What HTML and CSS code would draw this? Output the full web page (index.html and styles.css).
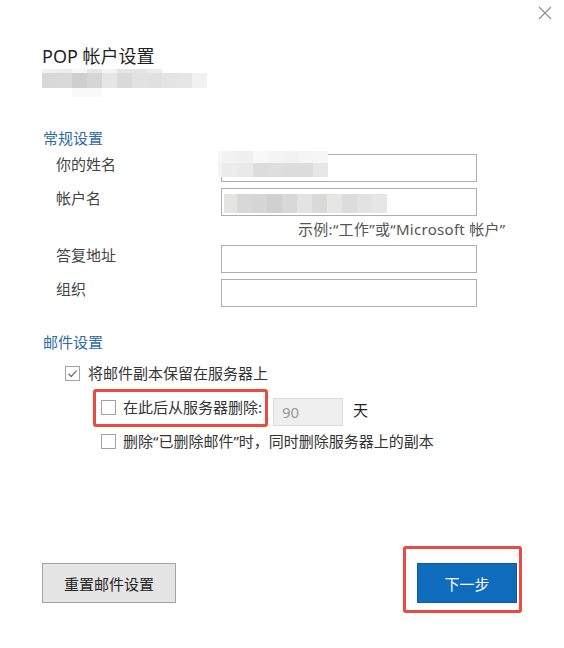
FILE: index.html
```html
<!doctype html>
<html>
<head>
    <meta charset="utf-8">
    <title>POP 帐户设置</title>
    <link rel="stylesheet" href="styles.css">
</head>
<body>

<div class="dialog">
    <button class="close" type="button" aria-label="关闭">
        <svg width="14" height="14" viewBox="0 0 14 14"><path d="M1 1L13 13M13 1L1 13" stroke="#8c8c8c" stroke-width="1.1" fill="none"/></svg>
    </button>

    <div class="head">
        <h1 class="title">POP 帐户设置</h1>
        <div class="mosaic mosaic-email"></div>
    </div>

    <div class="group">
        <h2 class="group-title">常规设置</h2>
        <div class="form">
            <label class="form-label">你的姓名</label>
            <div class="field">
                <input class="text-input" type="text">
                <span class="mosaic mosaic-name"></span>
            </div>

            <label class="form-label">帐户名</label>
            <div class="field">
                <input class="text-input" type="text">
                <span class="mosaic mosaic-account"></span>
            </div>

            <div class="hint">示例:“工作”或“Microsoft 帐户”</div>

            <label class="form-label">答复地址</label>
            <div class="field"><input class="text-input" type="text"></div>

            <label class="form-label">组织</label>
            <div class="field"><input class="text-input" type="text"></div>
        </div>
    </div>

    <div class="group group-mail">
        <h2 class="group-title">邮件设置</h2>

        <div class="check-row">
            <span class="box checked">
                <svg width="13" height="13" viewBox="0 0 13 13"><path d="M2.5 6.8L5.2 9.5L10.6 3.6" stroke="#707070" stroke-width="1.3" fill="none"/></svg>
            </span>
            <span class="check-text">将邮件副本保留在服务器上</span>
        </div>

        <div class="check-row sub">
            <span class="marked marked-delete">
                <span class="box"></span>
                <span class="check-text">在此后从服务器删除:</span>
            </span>
            <input class="days" type="text" value="90" disabled>
            <span class="days-unit">天</span>
        </div>

        <div class="check-row sub">
            <span class="box"></span>
            <span class="check-text">删除“已删除邮件”时，同时删除服务器上的副本</span>
        </div>
    </div>

    <div class="footer">
        <button class="btn btn-reset" type="button">重置邮件设置</button>
        <span class="marked marked-next">
            <button class="btn btn-next" type="button">下一步</button>
        </span>
    </div>
</div>

</body>
</html>
```

FILE: styles.css
```css
html, body {
    margin: 0;
    background: #fff;
}

body {
    font-family: "Noto Sans", "Noto Sans CJK SC", sans-serif;
    font-size: 15px;
    color: #333;
}

.dialog {
    position: relative;
    display: flex;
    flex-direction: column;
    min-height: 648px;
    box-sizing: border-box;
    padding-left: 42px;
}

.close {
    position: absolute;
    top: 6px;
    right: 12px;
    width: 14px;
    height: 14px;
    padding: 0;
    border: 0;
    background: none;
}
.close svg {
    display: block;
}

/* header */

.head {
    padding-top: 44px;
}

.title {
    margin: 0;
    font-size: 18px;
    font-weight: normal;
    line-height: 24px;
    color: #1f1f1f;
}

.mosaic {
    display: block;
}

.mosaic-email {
    width: 165px;
    height: 28px;
    margin-top: 1px;
    background:
        linear-gradient(90deg, #f1f1f1 0 15px, #eeeeee 15px 30px, #f7f7f7 30px 45px, #e8e8e8 45px 60px, #f4f4f4 60px 75px, #e4e4e4 75px 90px, #e5e5e5 90px 105px, #ececec 105px 120px) 0 0 / 120px 4px no-repeat,
        linear-gradient(90deg, #d8d8d8 0 15px, #d9d9d9 15px 30px, #cfcfcf 30px 45px, #d5d5d5 45px 60px, #e6e6e6 60px 75px, #dadada 75px 90px, #e2e2e2 90px 105px, #e1e1e1 105px 120px, #e4e4e4 120px 135px, #e6e6e6 135px 150px, #f1f1f1 150px 165px) 0 4px / 165px 15px no-repeat,
        linear-gradient(#f9f9f9, #f9f9f9) 30px 19px / 30px 9px no-repeat;
}

/* sections */

.group {
    margin-top: 31px;
}

.group-title {
    margin: 0 0 6px 1px;
    font-size: 15px;
    font-weight: normal;
    line-height: 20px;
    color: #2e6aa6;
}

.form {
    display: grid;
    grid-template-columns: 165px 256px;
    row-gap: 6px;
    margin-left: 14px;
}

.form-label {
    line-height: 20px;
    color: #444;
}

.field {
    position: relative;
    height: 28px;
}

.text-input {
    display: block;
    width: 100%;
    height: 28px;
    box-sizing: border-box;
    margin: 0;
    border: 1px solid #adadad;
    background: #fff;
    font: inherit;
}

.field .mosaic {
    position: absolute;
}

.mosaic-name {
    left: -3px;
    top: -3px;
    width: 110px;
    height: 26px;
    background:
        linear-gradient(90deg, #f6f6f6 0 4px, #f2f2f2 4px 19px, #f0f0f0 19px 35px, #f8f8f8 35px 50px, #f4f4f4 50px 65px, #f2f2f2 65px 80px, #f5f5f5 80px 95px, #f6f6f6 95px 110px) 0 0 / 110px 12px no-repeat,
        linear-gradient(90deg, #f4f4f4 0 4px, #ececec 4px 19px, #e9e9e9 19px 35px, #dcdcdc 35px 50px, #dedede 50px 65px, #dcdcdc 65px 80px, #dcdcdc 80px 95px, #e7e7e7 95px 110px) 0 12px / 110px 14px no-repeat;
}

.mosaic-account {
    left: 3px;
    top: 6px;
    width: 163px;
    height: 19px;
    background: linear-gradient(90deg, #e4e4e2 0 13px, #d7d8d7 13px 28px, #d6d6d6 28px 43px, #d0d0d0 43px 58px, #d8d8d8 58px 73px, #e3e3e3 73px 88px, #d9d9d9 88px 103px, #e6e6e4 103px 118px, #dcdcdc 118px 133px, #e2e2e2 133px 148px, #e6e6e6 148px 163px);
}

.hint {
    grid-column: 2;
    height: 17px;
    margin-left: 77px;
    line-height: 14px;
    letter-spacing: 0.3px;
    white-space: nowrap;
    color: #555;
}

/* mail settings */

.group-mail {
    margin-top: 25px;
}

.group-mail .group-title {
    margin-bottom: 4px;
}

.check-row {
    display: flex;
    align-items: center;
    height: 34px;
    margin-left: 23px;
}

.check-row.sub {
    margin-left: 59px;
}

.box {
    display: flex;
    align-items: center;
    justify-content: center;
    width: 15px;
    height: 15px;
    box-sizing: border-box;
    border: 1px solid #a3a3a3;
    background: #fff;
    flex: none;
}

.check-text {
    margin-left: 8px;
    line-height: 20px;
    color: #333;
    white-space: nowrap;
}

.sub .check-text {
    margin-left: 7px;
}

.marked {
    position: relative;
    display: inline-flex;
    align-items: center;
}

/* red annotation frames drawn over the screenshot */
.marked::after {
    content: "";
    position: absolute;
    border: 3px solid #ea4a3f;
    border-radius: 3px;
    pointer-events: none;
}

.marked-delete::after {
    left: -8px;
    right: -6px;
    top: -8px;
    bottom: -10px;
}

.days {
    width: 70px;
    height: 28px;
    box-sizing: border-box;
    margin: 9px 0 0 11px;
    padding: 0 8px;
    border: 1px solid #dcdcdc;
    background: #efefef;
    font: inherit;
    color: #999;
}

.days-unit {
    margin: 5px 0 0 10px;
    color: #222;
}

/* footer */

.footer {
    display: flex;
    align-items: flex-start;
    justify-content: space-between;
    margin-top: auto;
    padding: 0 47px 45px 0;
}

.btn {
    height: 40px;
    margin: 0;
    font: inherit;
    font-size: 15px;
    cursor: pointer;
}

.btn-reset {
    width: 134px;
    border: 1px solid #a3a3a3;
    background: #e5e5e5;
    color: #222;
}

.btn-next {
    width: 100px;
    border: 1px solid #0b5a9e;
    background: #0f6cbd;
    color: #fff;
}

.marked-next::after {
    left: -14px;
    right: -5px;
    top: -17px;
    bottom: -10px;
}
```
